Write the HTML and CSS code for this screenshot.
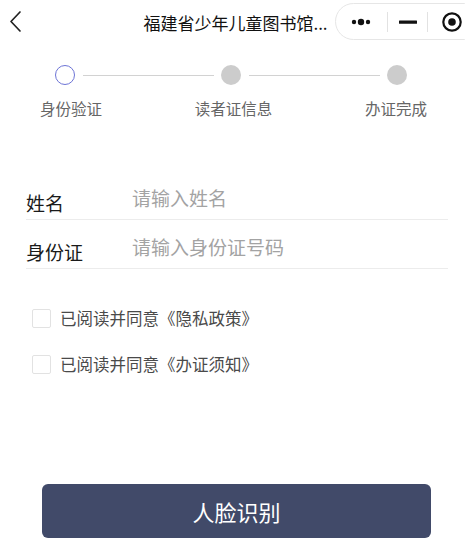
FILE: index.html
```html
<!DOCTYPE html>
<html lang="zh-CN">
<head>
<meta charset="utf-8">
<title>身份验证</title>
<link rel="stylesheet" href="styles.css">
</head>
<body>
<div class="page">
  <header class="navbar">
    <span class="back">
      <svg width="14" height="24" viewBox="0 0 14 24"><polyline points="11,2 2,11.5 11,21" fill="none" stroke="#222" stroke-width="1.7" stroke-linecap="round" stroke-linejoin="round"/></svg>
    </span>
    <h1 class="nav-title">福建省少年儿童图书馆...</h1>
    <div class="capsule">
      <span class="cap-btn">
        <svg width="24" height="10" viewBox="0 0 24 10"><circle cx="5" cy="5" r="2.2" fill="#111"/><circle cx="12" cy="5" r="3.2" fill="#111"/><circle cx="19" cy="5" r="2.2" fill="#111"/></svg>
      </span>
      <span class="cap-sep"></span>
      <span class="cap-btn">
        <svg width="18" height="6" viewBox="0 0 18 6"><rect x="0" y="1.5" width="18" height="3.2" rx="0.5" fill="#111"/></svg>
      </span>
      <span class="cap-sep"></span>
      <span class="cap-btn">
        <svg width="22" height="22" viewBox="0 0 22 22"><circle cx="11" cy="11" r="8.7" fill="none" stroke="#111" stroke-width="2.2"/><circle cx="11" cy="11" r="3.8" fill="#111"/></svg>
      </span>
    </div>
  </header>

  <section class="steps">
    <div class="step-dots">
      <span class="dot dot-active"></span>
      <span class="step-line"></span>
      <span class="dot"></span>
      <span class="step-line"></span>
      <span class="dot"></span>
    </div>
    <div class="step-labels">
      <span>身份验证</span>
      <span>读者证信息</span>
      <span>办证完成</span>
    </div>
  </section>

  <section class="form">
    <div class="form-row">
      <span class="form-label">姓名</span>
      <span class="form-input">请输入姓名</span>
    </div>
    <div class="form-row">
      <span class="form-label">身份证</span>
      <span class="form-input">请输入身份证号码</span>
    </div>
  </section>

  <section class="agree">
    <label class="agree-item"><span class="checkbox"></span><span>已阅读并同意《隐私政策》</span></label>
    <label class="agree-item"><span class="checkbox"></span><span>已阅读并同意《办证须知》</span></label>
  </section>

  <div class="action">
    <button class="btn-primary" type="button">人脸识别</button>
  </div>
</div>
</body>
</html>
```

FILE: styles.css
```css
* {
  box-sizing: border-box;
  margin: 0;
  padding: 0;
}

html, body {
  width: 465px;
  height: 559px;
  overflow: hidden;
  background: #fff;
}

body {
  font-family: "Noto Sans CJK SC", "Noto Sans", sans-serif;
  color: #222;
}

.page {
  position: relative;
  width: 465px;
  height: 559px;
}

/* nav bar */
.navbar {
  position: relative;
  height: 44px;
  display: flex;
  align-items: center;
  justify-content: center;
}

.back {
  position: absolute;
  left: 9px;
  top: 10px;
  display: flex;
}

.nav-title {
  font-size: 17px;
  font-weight: 400;
  line-height: 24px;
  color: #111;
  margin-left: 6px;
  margin-top: 1px;
}

.capsule {
  position: absolute;
  left: 335px;
  top: 3px;
  width: 148px;
  height: 37px;
  border: 1px solid #e6e6e6;
  border-radius: 19px;
  background: #fff;
  display: flex;
  align-items: center;
  padding-left: 13px;
}

.cap-btn {
  display: flex;
  align-items: center;
  justify-content: center;
}

.cap-btn:nth-child(1) { width: 24px; }
.cap-btn:nth-child(3) { width: 18px; }
.cap-btn:nth-child(5) { width: 22px; }

.cap-sep {
  width: 1px;
  height: 20px;
  background: #e2e2e2;
  margin: 0 13px 0 10px;
}

.cap-sep:nth-of-type(2) {
  margin: 0 11px 0 14px;
}

/* steps */
.steps {
  margin-top: 21px;
}

.step-dots {
  display: flex;
  align-items: center;
  padding: 0 58px 0 55px;
  height: 20px;
}

.dot {
  width: 20px;
  height: 20px;
  border-radius: 50%;
  background: #cccccc;
  flex: none;
}

.dot-active {
  background: #fff;
  border: 1.5px solid #6d74d6;
}

.step-line {
  flex: 1;
  height: 1px;
  background: #d2d2d2;
  margin: 0 7px 0 8px;
}

.step-labels {
  display: flex;
  justify-content: space-between;
  padding: 0 38px 0 40px;
  margin-top: 13px;
  font-size: 15.5px;
  line-height: 20px;
  color: #666;
}

/* form */
.form {
  margin: 53px 17px 0 26px;
}

.form-row {
  height: 49px;
  display: flex;
  align-items: flex-end;
  border-bottom: 1px solid #ececec;
}

.form-label {
  width: 106px;
  font-size: 19px;
  line-height: 24px;
  color: #1a1a1a;
  margin-bottom: 4px;
}

.form-input {
  flex: 1;
  font-size: 19px;
  line-height: 24px;
  color: #a3a3a3;
  margin-bottom: 9px;
}

/* agreements */
.agree {
  margin: 40px 0 0 32px;
  display: flex;
  flex-direction: column;
  gap: 27px;
}

.agree-item {
  display: flex;
  align-items: center;
  height: 19px;
  font-size: 16.5px;
  line-height: 19px;
  color: #4a4a4a;
}

.checkbox {
  width: 19px;
  height: 19px;
  border: 1px solid #e2e2e2;
  border-radius: 2px;
  margin-right: 9px;
  flex: none;
}

/* action */
.action {
  position: absolute;
  left: 42px;
  right: 34px;
  top: 484px;
}

.btn-primary {
  width: 100%;
  height: 54px;
  border: none;
  border-radius: 6px;
  background: #414a69;
  color: #fff;
  font-family: "Noto Sans CJK SC", "Noto Sans", sans-serif;
  font-size: 22px;
  line-height: 54px;
}
```
